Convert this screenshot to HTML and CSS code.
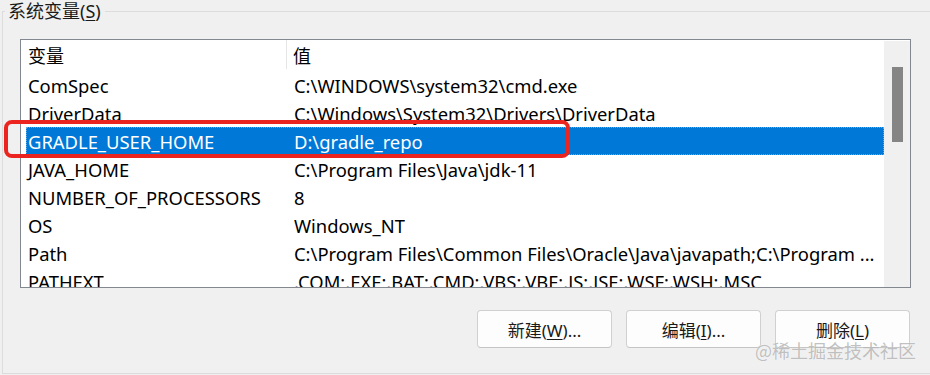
FILE: index.html
```html
<!DOCTYPE html>
<html lang="zh-CN">
<head>
<meta charset="utf-8">
<title>系统变量</title>
<link rel="stylesheet" href="styles.css">
</head>
<body>
<fieldset class="group">
  <legend class="legend">系统变量(<u>S</u>)</legend>
  <div class="list">
    <div class="rows">
      <div class="head">
        <div class="hname">变量</div>
        <div class="hval">值</div>
      </div>
      <div class="row"><div class="name">ComSpec</div><div class="val">C:\WINDOWS\system32\cmd.exe</div></div>
      <div class="row"><div class="name">DriverData</div><div class="val">C:\Windows\System32\Drivers\DriverData</div></div>
      <div class="row selected"><div class="name">GRADLE_USER_HOME</div><div class="val">D:\gradle_repo</div></div>
      <div class="row"><div class="name">JAVA_HOME</div><div class="val">C:\Program Files\Java\jdk-11</div></div>
      <div class="row"><div class="name">NUMBER_OF_PROCESSORS</div><div class="val">8</div></div>
      <div class="row"><div class="name">OS</div><div class="val">Windows_NT</div></div>
      <div class="row"><div class="name">Path</div><div class="val">C:\Program Files\Common Files\Oracle\Java\javapath;C:\Program ...</div></div>
      <div class="row"><div class="name">PATHEXT</div><div class="val">.COM;.EXE;.BAT;.CMD;.VBS;.VBE;.JS;.JSE;.WSF;.WSH;.MSC</div></div>
    </div>
    <div class="scrollbar"><div class="thumb"></div></div>
  </div>
  <div class="buttons">
    <button class="btn">新建(<u>W</u>)...</button>
    <button class="btn">编辑(<u>I</u>)...</button>
    <button class="btn">删除(<u>L</u>)</button>
  </div>
</fieldset>
<div class="highlight"></div>
<div class="watermark">@稀土掘金技术社区</div>
</body>
</html>
```

FILE: styles.css
```css
* { box-sizing: border-box; }
html, body {
  margin: 0;
  padding: 0;
  width: 930px;
  height: 375px;
  overflow: hidden;
  background: #f0f0f0;
  font-family: "Noto Sans", "Noto Sans CJK SC", sans-serif;
  color: #000;
}
body { position: relative; }

.group {
  margin: 0 0 0 2px;
  padding: 0;
  height: 374px;
  border: 1px solid #dcdcdc;
  border-right: none;
  min-width: 0;
}
.legend {
  margin-left: 2px;
  padding: 0 4px 0 3px;
  font-size: 18px;
  line-height: 22px;
  color: #1a1a1a;
}
.legend u, .btn u { text-underline-offset: 2px; }

.list {
  margin: 17px 0 0 17px;
  width: 891px;
  height: 249px;
  border: 1px solid #828790;
  background: #fff;
  display: flex;
  overflow: hidden;
}
.rows {
  flex: 1;
  min-width: 0;
  overflow: hidden;
  font-size: 18.4px;
}
.head {
  display: flex;
  height: 31px;
  align-items: stretch;
  font-size: 18px;
}
.hname {
  width: 266px;
  padding-left: 7px;
  border-right: 1px solid #e5e5e5;
  display: flex;
  align-items: center;
  padding-top: 1px;
  margin-bottom: 2px;
}
.hval {
  padding-left: 6px;
  display: flex;
  align-items: center;
  padding-top: 1px;
  margin-bottom: 2px;
}
.row {
  display: flex;
  height: 28px;
  margin-left: 5px;
  align-items: center;
  white-space: nowrap;
  color: #000;
}
.name {
  width: 261px;
  padding-left: 2px;
  flex: none;
}
.val {
  padding-left: 7px;
  overflow: hidden;
}
.selected {
  background: #0078d7;
  color: #fff;
  outline: 1px dotted #6aa8e0;
  outline-offset: -1px;
}

.scrollbar {
  width: 26px;
  flex: none;
  margin-top: 1px;
  background: #f0f0f0;
  padding: 26px 0 0 8px;
}
.thumb {
  width: 11px;
  height: 75px;
  background: #858585;
}

.buttons {
  display: flex;
  justify-content: flex-end;
  gap: 14px;
  margin-top: 22px;
  padding-right: 20px;
}
.btn {
  width: 135px;
  height: 38px;
  border: 1px solid #d0d0d0;
  border-bottom-color: #c4c4c4;
  border-radius: 4px;
  background: #fdfdfd;
  font-family: "Noto Sans", "Noto Sans CJK SC", sans-serif;
  font-size: 17px;
  color: #1a1a1a;
  padding: 0;
}

.highlight {
  position: absolute;
  left: 4px;
  top: 120px;
  width: 566px;
  height: 38px;
  border: 4px solid #ec2420;
  border-radius: 8px;
}
.watermark {
  position: absolute;
  left: 755px;
  top: 338px;
  font-family: "Noto Sans CJK SC", sans-serif;
  font-size: 18px;
  line-height: 24px;
  color: rgba(140, 140, 140, 0.55);
  text-shadow: 0 0 1px rgba(255,255,255,0.8);
  white-space: nowrap;
}
```
